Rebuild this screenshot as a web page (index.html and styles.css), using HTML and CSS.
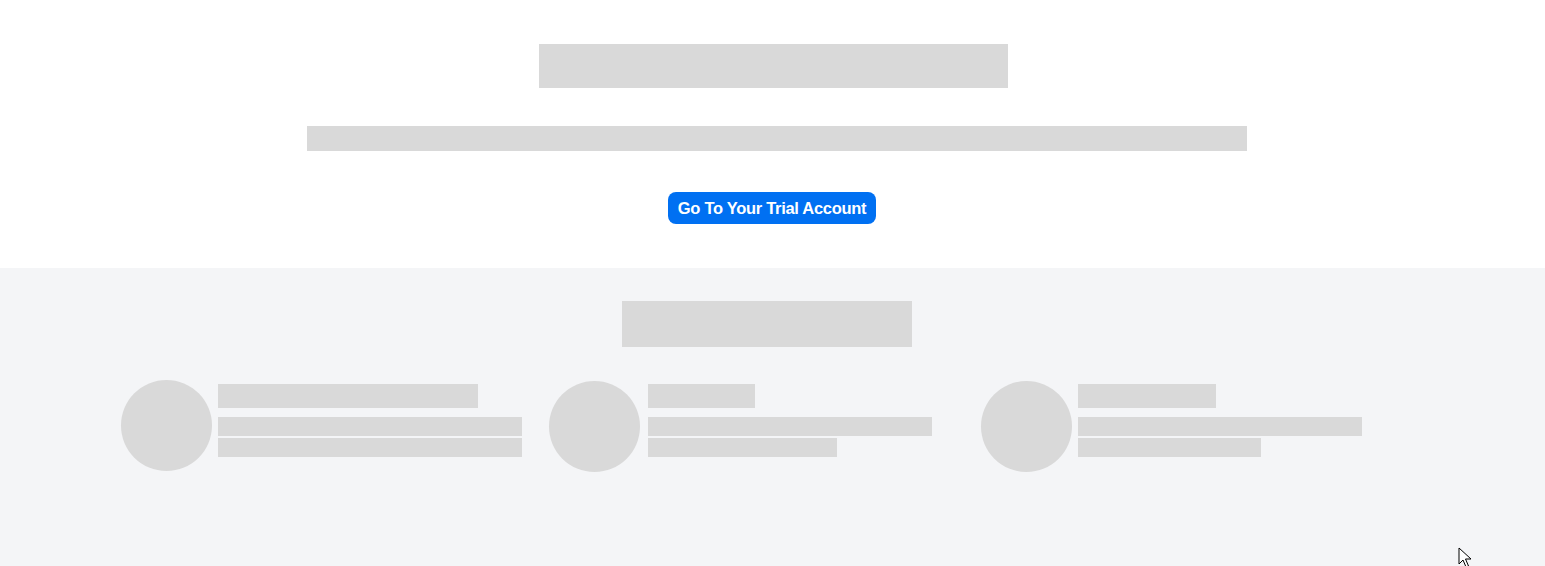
FILE: index.html
```html
<!DOCTYPE html>
<html lang="en">
<head>
<meta charset="utf-8">
<title>Trial Account</title>
<link rel="stylesheet" href="styles.css">
</head>
<body>
<div class="page">
  <section class="hero">
    <div class="sk sk-title"></div>
    <div class="sk sk-sub"></div>
    <button class="cta" type="button">Go To Your Trial Account</button>
  </section>
  <section class="features">
    <div class="sk sk-heading"></div>
    <div class="cards">
      <div class="card card-1">
        <div class="avatar"></div>
        <div class="lines">
          <div class="sk line-h" style="width:260px"></div>
          <div class="sk line" style="width:304px"></div>
          <div class="sk line" style="width:304px"></div>
        </div>
      </div>
      <div class="card card-2">
        <div class="avatar"></div>
        <div class="lines">
          <div class="sk line-h" style="width:107px"></div>
          <div class="sk line" style="width:284px"></div>
          <div class="sk line" style="width:189px"></div>
        </div>
      </div>
      <div class="card card-3">
        <div class="avatar"></div>
        <div class="lines">
          <div class="sk line-h" style="width:138px"></div>
          <div class="sk line" style="width:284px"></div>
          <div class="sk line" style="width:183px"></div>
        </div>
      </div>
    </div>
  </section>
  <svg class="cursor" width="14" height="22" viewBox="0 0 14 22" aria-hidden="true">
    <path d="M1 1 L1 17 L5 13 L8 20 L10.5 19 L7.5 12 L13 12 Z" fill="#fff" stroke="#000" stroke-width="1" stroke-linejoin="round"/>
  </svg>
</div>
</body>
</html>
```

FILE: styles.css
```css
* { box-sizing: border-box; }
html, body { margin: 0; padding: 0; }
body {
  font-family: "Liberation Sans", Arial, sans-serif;
  background: #ffffff;
  width: 1545px;
  height: 566px;
  overflow: hidden;
}
.page {
  position: relative;
  height: 566px;
  display: flex;
  flex-direction: column;
}
.sk { background: #d9d9d9; }

.hero {
  background: #ffffff;
  display: flex;
  flex-direction: column;
  align-items: flex-start;
  padding: 44px 0 44px 0;
  height: 268px;
  border-top-left-radius: 4px;
}
.sk-title {
  width: 469px;
  height: 44px;
  margin-left: 539px;
}
.sk-sub {
  width: 940px;
  height: 25px;
  margin-left: 307px;
  margin-top: 38px;
}
.cta {
  margin-top: 41px;
  margin-left: 668px;
  width: 208px;
  height: 32px;
  border: none;
  border-radius: 8px;
  background: #0070f2;
  color: #ffffff;
  font-family: "Liberation Sans", Arial, sans-serif;
  font-weight: 700;
  font-size: 16.5px;
  letter-spacing: -0.3px;
  padding: 0;
  display: flex;
  align-items: center;
  justify-content: center;
}

.features {
  flex: 1;
  background: #f4f5f7;
  padding-top: 33px;
  display: flex;
  flex-direction: column;
}
.sk-heading {
  width: 290px;
  height: 46px;
  margin-left: 622px;
}
.cards {
  margin-top: 33px;
  display: grid;
  grid-template-columns: 428px 432px 430px;
  padding-left: 121px;
}
.card {
  display: flex;
  align-items: flex-start;
  gap: 6px;
}
.card-2 { gap: 8px; }
.avatar {
  width: 91px;
  height: 91px;
  border-radius: 50%;
  background: #d9d9d9;
  flex: none;
}
.card-2 .avatar, .card-3 .avatar { margin-top: 1px; }
.lines {
  display: flex;
  flex-direction: column;
  padding-top: 4px;
}
.line-h { height: 24px; }
.line { height: 19px; }
.line-h + .line { margin-top: 9px; }
.line + .line { margin-top: 2px; }

.cursor {
  position: absolute;
  left: 1458px;
  top: 547px;
}
```
